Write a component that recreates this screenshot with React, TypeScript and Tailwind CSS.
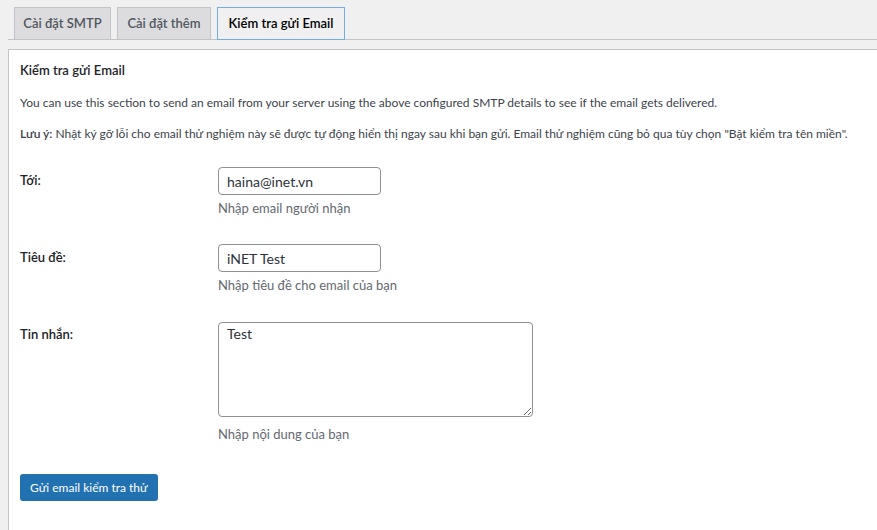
import { useState } from "react";

const tabs = [
  { label: "Cài đặt SMTP", width: "w-[97px]" },
  { label: "Cài đặt thêm", width: "w-[94px]" },
  { label: "Kiểm tra gửi Email", width: "w-[128px]" },
];

export default function App() {
  const [active, setActive] = useState(2);
  const [to, setTo] = useState("haina@inet.vn");
  const [subject, setSubject] = useState("iNET Test");
  const [message, setMessage] = useState("Test");

  return (
    <div
      className="w-[877px] h-[530px] overflow-hidden bg-[#f0f0f1] text-[12px] text-[#3c434a]"
      style={{ fontFamily: 'Lato, "Noto Sans", sans-serif' }}
    >
      {/* Tabs */}
      <div className="ml-[8px] pt-[7px] pl-[6px] flex gap-[6px] border-b border-[#c3c4c7]">
        {tabs.map((t, i) => (
          <button
            key={t.label}
            onClick={() => setActive(i)}
            className={
              i === active
                ? `${t.width} h-[33px] -mb-px border border-[#72aee6] bg-[#f0f0f1] text-black text-[13px] font-semibold`
                : `${t.width} h-[33px] -mb-px border border-[#c3c4c7] bg-[#dcdcde] text-[#50575e] text-[13px] font-semibold`
            }
          >
            {t.label}
          </button>
        ))}
      </div>

      {/* Panel */}
      <div className="mt-[9px] ml-[8px] w-[890px] h-[600px] bg-white border border-[#c3c4c7] px-[11px] pt-[10px]">
        <h2 className="text-[13px] leading-[20px] font-semibold text-[#1d2327]">Kiểm tra gửi Email</h2>

        <p className="mt-[13px] leading-[20px]">
          You can use this section to send an email from your server using the above configured SMTP details to see if
          the email gets delivered.
        </p>
        <p className="mt-[11px] leading-[20px] whitespace-nowrap">
          <span className="font-semibold">Lưu ý:</span> Nhật ký gỡ lỗi cho email thử nghiệm này sẽ được tự động hiển thị
          ngay sau khi bạn gửi. Email thử nghiệm cũng bỏ qua tùy chọn "Bật kiểm tra tên miền".
        </p>

        <div className="mt-[23px] grid grid-cols-[198px_1fr] text-[#1d2327] text-[13px]">
          {/* To */}
          <label className="font-semibold h-[28px] flex items-center">Tới:</label>
          <div>
            <input
              value={to}
              onChange={(e) => setTo(e.target.value)}
              className="w-[163px] h-[28px] border border-[#8c8f94] rounded-[4px] px-[8px] text-[14px] text-[#2c3338] outline-none"
            />
            <p className="mt-[3px] leading-[20px] text-[#646970]">Nhập email người nhận</p>
          </div>

          {/* Subject */}
          <label className="mt-[26px] font-semibold h-[28px] flex items-center">Tiêu đề:</label>
          <div className="mt-[26px]">
            <input
              value={subject}
              onChange={(e) => setSubject(e.target.value)}
              className="w-[163px] h-[28px] border border-[#8c8f94] rounded-[4px] px-[8px] text-[14px] text-[#2c3338] outline-none"
            />
            <p className="mt-[3px] leading-[20px] text-[#646970]">Nhập tiêu đề cho email của bạn</p>
          </div>

          {/* Message */}
          <label className="mt-[27px] pt-[2px] font-semibold leading-[20px]">Tin nhắn:</label>
          <div className="mt-[27px]">
            <textarea
              value={message}
              onChange={(e) => setMessage(e.target.value)}
              className="block w-[315px] h-[95px] border border-[#8c8f94] rounded-[4px] px-[8px] pt-[1px] text-[14px] leading-[20px] text-[#2c3338] outline-none"
            />
            <p className="mt-[7px] leading-[20px] text-[#646970]">Nhập nội dung của bạn</p>
          </div>
        </div>

        <button className="mt-[30px] h-[27px] px-[10px] rounded-[3px] bg-[#2271b1] text-white text-[12px]">
          Gửi email kiểm tra thử
        </button>
      </div>
    </div>
  );
}
